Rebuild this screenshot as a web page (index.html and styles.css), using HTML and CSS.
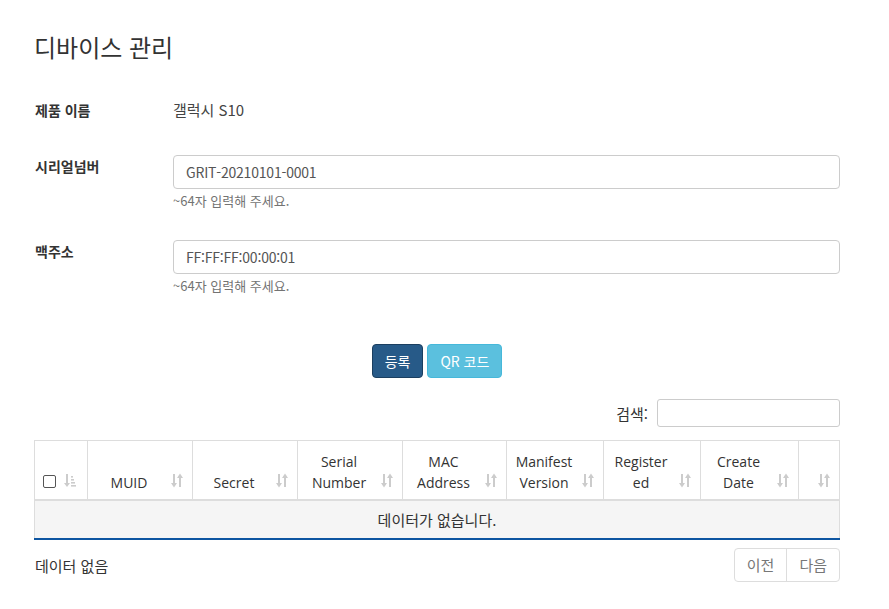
FILE: index.html
```html
<!DOCTYPE html>
<html lang="ko">
<head>
<meta charset="utf-8">
<title>디바이스 관리</title>
<link rel="stylesheet" href="styles.css">
</head>
<body>
<div class="page">
  <h2 class="title">디바이스 관리</h2>

  <div class="row row-static">
    <div class="label">제품 이름</div>
    <div class="value">갤럭시 S10</div>
  </div>

  <div class="row row-serial">
    <div class="label label-input">시리얼넘버</div>
    <div class="field">
      <div class="input">GRIT-20210101-0001</div>
      <div class="help">~64자 입력해 주세요.</div>
    </div>
  </div>

  <div class="row row-mac">
    <div class="label label-input">맥주소</div>
    <div class="field">
      <div class="input">FF:FF:FF:00:00:01</div>
      <div class="help">~64자 입력해 주세요.</div>
    </div>
  </div>

  <div class="actions">
    <button class="btn btn-primary">등록</button>
    <button class="btn btn-info">QR 코드</button>
  </div>

  <div class="search">
    <span class="search-label">검색:</span>
    <div class="search-input"></div>
  </div>

  <table class="grid">
    <colgroup>
      <col style="width:53px"><col style="width:105px"><col style="width:105px"><col style="width:105px"><col style="width:104px"><col style="width:97px"><col style="width:97px"><col style="width:98px"><col style="width:41px">
    </colgroup>
    <thead>
      <tr>
        <th class="th-check"><span class="cb"></span><svg class="sort-first" viewBox="0 0 12 15" width="12" height="15"><rect x="2" y="1" width="2" height="10" fill="#ccc"/><path d="M0 10h6l-3 4z" fill="#ccc"/><rect x="7" y="3" width="2" height="1.6" fill="#ccc"/><rect x="7" y="6" width="3" height="1.6" fill="#ccc"/><rect x="7" y="9" width="4" height="1.6" fill="#ccc"/><rect x="7" y="12" width="5" height="1.6" fill="#ccc"/></svg></th>
        <th><span class="th-text">MUID</span><svg class="sort" viewBox="0 0 12 15" width="12" height="15"><rect x="2" y="1" width="2" height="10" fill="#ccc"/><path d="M0 10h6l-3 4.5z" fill="#ccc"/><rect x="8" y="4" width="2" height="10" fill="#ccc"/><path d="M6 5h6l-3-4.5z" fill="#ccc"/></svg></th>
        <th><span class="th-text">Secret</span><svg class="sort" viewBox="0 0 12 15" width="12" height="15"><rect x="2" y="1" width="2" height="10" fill="#ccc"/><path d="M0 10h6l-3 4.5z" fill="#ccc"/><rect x="8" y="4" width="2" height="10" fill="#ccc"/><path d="M6 5h6l-3-4.5z" fill="#ccc"/></svg></th>
        <th><span class="th-text">Serial Number</span><svg class="sort" viewBox="0 0 12 15" width="12" height="15"><rect x="2" y="1" width="2" height="10" fill="#ccc"/><path d="M0 10h6l-3 4.5z" fill="#ccc"/><rect x="8" y="4" width="2" height="10" fill="#ccc"/><path d="M6 5h6l-3-4.5z" fill="#ccc"/></svg></th>
        <th><span class="th-text">MAC Address</span><svg class="sort" viewBox="0 0 12 15" width="12" height="15"><rect x="2" y="1" width="2" height="10" fill="#ccc"/><path d="M0 10h6l-3 4.5z" fill="#ccc"/><rect x="8" y="4" width="2" height="10" fill="#ccc"/><path d="M6 5h6l-3-4.5z" fill="#ccc"/></svg></th>
        <th><span class="th-text">Manifest Version</span><svg class="sort" viewBox="0 0 12 15" width="12" height="15"><rect x="2" y="1" width="2" height="10" fill="#ccc"/><path d="M0 10h6l-3 4.5z" fill="#ccc"/><rect x="8" y="4" width="2" height="10" fill="#ccc"/><path d="M6 5h6l-3-4.5z" fill="#ccc"/></svg></th>
        <th><span class="th-text">Registered</span><svg class="sort" viewBox="0 0 12 15" width="12" height="15"><rect x="2" y="1" width="2" height="10" fill="#ccc"/><path d="M0 10h6l-3 4.5z" fill="#ccc"/><rect x="8" y="4" width="2" height="10" fill="#ccc"/><path d="M6 5h6l-3-4.5z" fill="#ccc"/></svg></th>
        <th><span class="th-text">Create Date</span><svg class="sort" viewBox="0 0 12 15" width="12" height="15"><rect x="2" y="1" width="2" height="10" fill="#ccc"/><path d="M0 10h6l-3 4.5z" fill="#ccc"/><rect x="8" y="4" width="2" height="10" fill="#ccc"/><path d="M6 5h6l-3-4.5z" fill="#ccc"/></svg></th>
        <th><svg class="sort" viewBox="0 0 12 15" width="12" height="15"><rect x="2" y="1" width="2" height="10" fill="#ccc"/><path d="M0 10h6l-3 4.5z" fill="#ccc"/><rect x="8" y="4" width="2" height="10" fill="#ccc"/><path d="M6 5h6l-3-4.5z" fill="#ccc"/></svg></th>
      </tr>
    </thead>
    <tbody>
      <tr><td colspan="9" class="empty">데이터가 없습니다.</td></tr>
    </tbody>
  </table>

  <div class="footer">
    <div class="info">데이터 없음</div>
    <div class="pager">
      <span class="page-btn">이전</span><span class="page-btn">다음</span>
    </div>
  </div>
</div>
</body>
</html>
```

FILE: styles.css
```css
html, body {
  margin: 0;
  padding: 0;
  background: #fff;
}
body {
  font-family: "Noto Sans CJK KR", "Noto Sans", sans-serif;
  color: #333;
  font-size: 14px;
}
.page {
  width: 806px;
  padding: 33px 0 0 34px;
}
.title {
  margin: 0 0 39px 0;
  font-size: 24px;
  font-weight: 400;
  line-height: 28px;
  color: #333;
}
.row {
  display: flex;
}
.label {
  width: 138px;
  flex: none;
  padding-left: 1px;
  font-weight: 700;
  font-size: 14px;
  line-height: 20px;
  color: #333;
}
.value {
  font-size: 15px;
  line-height: 20px;
  color: #444;
}
.row-static {
  margin-bottom: 35px;
}
.row-serial {
  margin-bottom: 31px;
}
.label-input {
  padding-top: 1px;
}
.field {
  flex: 1;
}
.input {
  box-sizing: border-box;
  height: 34px;
  border: 1px solid #ccc;
  border-radius: 4px;
  padding: 0 12px;
  line-height: 32px;
  font-size: 14px;
  letter-spacing: -0.2px;
  color: #555;
}
.help {
  margin-top: 3px;
  font-size: 13px;
  line-height: 17px;
  color: #737373;
}
.actions {
  display: flex;
  justify-content: center;
  gap: 4px;
  margin-top: 50px;
}
.btn {
  box-sizing: border-box;
  height: 34px;
  border-radius: 4px;
  font-family: "Noto Sans CJK KR", sans-serif;
  font-size: 14px;
  color: #fff;
  padding: 0 12px;
  line-height: 32px;
}
.btn-primary {
  background: #275a88;
  border: 1px solid #1b3f60;
}
.btn-info {
  background: #5bc0de;
  border: 1px solid #46b8da;
}
.search {
  display: flex;
  justify-content: flex-end;
  align-items: center;
  margin-top: 21px;
  gap: 9px;
}
.search-label {
  font-size: 15px;
  color: #333;
}
.search-input {
  box-sizing: border-box;
  width: 183px;
  height: 28px;
  border: 1px solid #ccc;
  border-radius: 3px;
}
.grid {
  margin-top: 13px;
  width: 806px;
  border-collapse: collapse;
  table-layout: fixed;
}
.grid th {
  position: relative;
  border: 1px solid #ddd;
  border-bottom: 2px solid #ddd;
  height: 52px;
  padding: 0 30px 6px 8px;
  vertical-align: bottom;
  text-align: center;
  font-family: "Open Sans", "Noto Sans", sans-serif;
  font-weight: 400;
  font-size: 14px;
  line-height: 21px;
  color: #333;
  overflow-wrap: break-word;
}
.sort {
  position: absolute;
  right: 9px;
  bottom: 11px;
}
.th-check {
  text-align: left;
}
.cb {
  position: absolute;
  left: 8px;
  bottom: 11px;
  width: 11px;
  height: 11px;
  border: 1px solid #555;
  border-radius: 2px;
}
.sort-first {
  position: absolute;
  left: 29px;
  bottom: 11px;
}
.empty {
  height: 37px;
  padding: 0;
  background: #f5f5f5;
  border-left: 1px solid #ddd;
  border-right: 1px solid #ddd;
  border-bottom: 2px solid #0d55a1;
  text-align: center;
  font-size: 15px;
  color: #333;
}
.footer {
  display: flex;
  justify-content: space-between;
  align-items: center;
  margin-top: 8px;
}
.info {
  padding-left: 1px;
  font-size: 15px;
  color: #333;
}
.pager {
  display: flex;
  border: 1px solid #ddd;
  border-radius: 4px;
}
.page-btn {
  padding: 0 12px;
  line-height: 32px;
  font-size: 15px;
  color: #777;
}
.page-btn + .page-btn {
  border-left: 1px solid #ddd;
}
```
